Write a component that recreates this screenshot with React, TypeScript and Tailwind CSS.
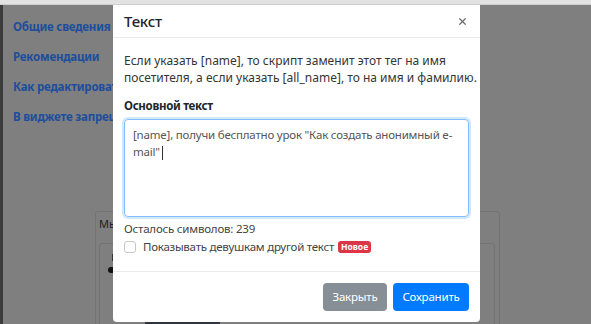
import { X } from 'lucide-react';

export default function App() {
  const font = { fontFamily: '"Noto Sans", "Open Sans", sans-serif' };
  return (
    <div className="relative w-[591px] h-[324px] overflow-hidden bg-[#7f7f7f]" style={font}>
      {/* top strip */}
      <div className="h-[5px] bg-[#e2e2e2] border-b border-[#cfcfcf]" />

      {/* page under overlay */}
      <div className="flex h-[319px]">
        <div className="w-[3px] bg-[#3b3b3b]" />
        <div className="flex flex-col gap-[12px] pl-[10px] pt-[13px] text-[11.5px] tracking-[-0.2px] font-bold text-[#1c4e9d] whitespace-nowrap">
          <div className="leading-[18px]">Общие сведения</div>
          <div className="leading-[18px]">Рекомендации</div>
          <div className="leading-[18px]">Как редактировать</div>
          <div className="leading-[18px]">В виджете запрещено</div>
        </div>
      </div>

      {/* background card */}
      <div className="absolute left-[95px] top-[211px] w-[405px] h-[130px] border border-[#737373] rounded-[3px]">
        <div className="pl-[3px] pt-[5px] text-[11px] leading-[14px] text-[#222]">Мы</div>
        <div className="ml-[3px] mr-[4px] mt-[12px] h-[90px] border border-[#737373] rounded-[3px]">
          <div className="ml-[12px] mt-[10px] w-[3px] h-[7px] bg-[#333]" />
          <div className="ml-[8px] mt-[6px] w-[7px] h-[6px] rounded-full bg-[#111]" />
        </div>
      </div>
      <div className="absolute left-[145px] top-[321px] w-[75px] h-[3px] bg-[#2e3440]" />

      {/* modal */}
      <div className="absolute left-[113px] top-[5px] w-[367px] h-[317px] bg-white rounded-b-[4px] flex flex-col">
        <div className="h-[33px] flex items-center justify-between pl-[11px] pr-[12px] border-b border-[#e9ecef]">
          <div className="text-[15px] font-medium tracking-[-0.2px] text-[#212529] leading-none">Текст</div>
          <X className="w-[11px] h-[11px] text-[#6a6a6a]" strokeWidth={2.6} />
        </div>
        <div className="flex-1 px-[11px] pt-[14px]">
          <p className="text-[12px] leading-[17px] text-[#353535] whitespace-nowrap">
            Если указать [name], то скрипт заменит этот тег на имя
            <br />
            посетителя, а если указать [all_name], то на имя и фамилию.
          </p>
          <div className="mt-[11px] text-[11.5px] tracking-[-0.3px] font-bold text-[#212529] leading-[17px]">Основной текст</div>
          <div className="mt-[5px] h-[98px] rounded-[4px] border border-[#80bdff] shadow-[0_0_0_2px_rgba(0,123,255,0.18)] px-[8px] pt-[6px] text-[11.5px] tracking-[-0.2px] leading-[17px] text-[#555] whitespace-nowrap">
            [name], получи бесплатно урок "Как создать анонимный e-
            <br />
            mail"<span className="inline-block w-px h-[14px] bg-[#333] align-middle ml-[2px]" />
          </div>
          <div className="mt-[3px] text-[11.5px] tracking-[-0.2px] leading-[17px] text-[#444]">Осталось символов: 239</div>
          <div className="mt-[1px] flex items-center">
            <div className="w-[12px] h-[12px] rounded-[3px] border border-[#c8c8c8] bg-white" />
            <span className="ml-[7px] text-[11.5px] tracking-[-0.25px] leading-[17px] text-[#444]">Показывать девушкам другой текст</span>
            <span className="ml-[4px] px-[3px] rounded-[3px] bg-[#dc3545] text-white text-[8.5px] font-bold leading-[12px]">Новое</span>
          </div>
        </div>
        <div className="h-[51px] border-t border-[#e9ecef] flex items-center justify-end gap-[6px] pr-[11px]">
          <button className="h-[28px] w-[64px] rounded-[4px] bg-[#868e96] text-white text-[11.5px] tracking-[-0.2px]">Закрыть</button>
          <button className="h-[28px] w-[76px] rounded-[4px] bg-[#007bff] text-white text-[11.5px] tracking-[-0.2px]">Сохранить</button>
        </div>
      </div>
    </div>
  );
}
